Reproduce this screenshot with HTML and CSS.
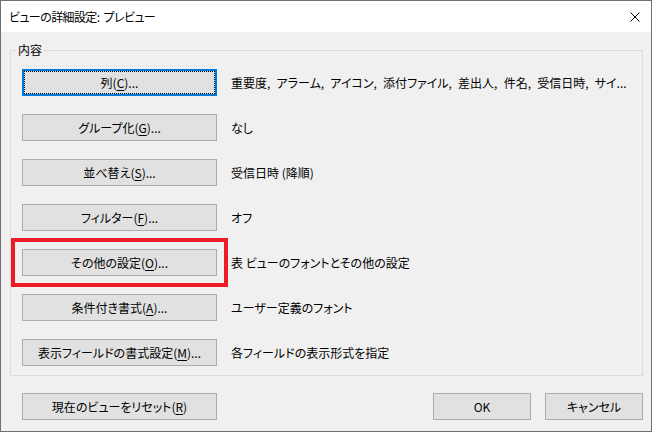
FILE: index.html
```html
<!DOCTYPE html>
<html lang="ja">
<head>
<meta charset="utf-8">
<title>ビューの詳細設定</title>
<link rel="stylesheet" href="styles.css">
</head>
<body>
<div class="window">
  <div class="titlebar">
    <span class="title">ビューの詳細設定: プレビュー</span>
    <span class="close">
      <svg width="10" height="10" viewBox="0 0 10 10"><path d="M0.5 0.5 L9.5 9.5 M9.5 0.5 L0.5 9.5" stroke="#000" stroke-width="1" fill="none"/></svg>
    </span>
  </div>
  <div class="content">
    <fieldset class="group">
      <legend class="legend">内容</legend>
      <div class="rows">
        <div class="row">
          <button class="btn wide focused">列(<u>C</u>)...</button>
          <span class="desc list">重要度, アラーム, アイコン, 添付ファイル, 差出人, 件名, 受信日時, サイ...</span>
        </div>
        <div class="row">
          <button class="btn wide">グループ化(<u>G</u>)...</button>
          <span class="desc">なし</span>
        </div>
        <div class="row">
          <button class="btn wide">並べ替え(<u>S</u>)...</button>
          <span class="desc">受信日時 (降順)</span>
        </div>
        <div class="row">
          <button class="btn wide">フィルター(<u>F</u>)...</button>
          <span class="desc">オフ</span>
        </div>
        <div class="row">
          <button class="btn wide highlighted">その他の設定(<u>O</u>)...</button>
          <span class="desc">表 ビューのフォントとその他の設定</span>
        </div>
        <div class="row">
          <button class="btn wide">条件付き書式(<u>A</u>)...</button>
          <span class="desc">ユーザー定義のフォント</span>
        </div>
        <div class="row">
          <button class="btn wide">表示フィールドの書式設定(<u>M</u>)...</button>
          <span class="desc">各フィールドの表示形式を指定</span>
        </div>
      </div>
    </fieldset>
    <div class="footer">
      <button class="btn wide">現在のビューをリセット(<u>R</u>)</button>
      <div class="spacer"></div>
      <button class="btn small">OK</button>
      <button class="btn small">キャンセル</button>
    </div>
  </div>
</div>
</body>
</html>
```

FILE: styles.css
```css
* { box-sizing: border-box; }
html, body {
  margin: 0;
  padding: 0;
  background: #f0f0f0;
}
body {
  font-family: "Noto Sans CJK JP", "Noto Sans", sans-serif;
  font-size: 12px;
  line-height: 16px;
  color: #000;
  font-feature-settings: "palt" 1;
}
.window {
  width: 652px;
  height: 432px;
  border: 1px solid #707070;
  background: #f0f0f0;
  display: flex;
  flex-direction: column;
}
.titlebar {
  height: 31px;
  background: #fff;
  display: flex;
  align-items: center;
  padding: 0 11px 0 8px;
  flex: none;
}
.title {
  flex: 1;
  font-size: 12px;
  letter-spacing: -0.6px;
  word-spacing: 2px;
}
.close {
  width: 10px;
  height: 10px;
  display: flex;
}
.content {
  padding: 10px 8px 0 9px;
  display: flex;
  flex-direction: column;
}
.group {
  margin: 0;
  border: 1px solid #dcdcdc;
  padding: 0 8px 9px 11px;
  width: 633px;
}
.legend {
  padding: 0 2px;
  margin-left: -6px;
  line-height: 16px;
}
.rows {
  display: flex;
  flex-direction: column;
  gap: 18px;
  padding-top: 11px;
}
.row {
  display: flex;
  align-items: center;
  gap: 14px;
}
.btn {
  font-family: inherit;
  font-feature-settings: "palt" 1;
  font-size: 12px;
  line-height: 16px;
  color: #000;
  background: #e1e1e1;
  border: 1px solid #adadad;
  height: 27px;
  padding: 0;
  margin: 0;
  flex: none;
}
.btn u { text-underline-offset: 2px; }
.wide { width: 195px; }
.small { width: 98px; }
.focused {
  border: 2px solid #0078d7;
  outline: 1px dotted #000;
  outline-offset: -3px;
}
.highlighted {
  outline: 4px solid #ec1c24;
  outline-offset: 7px;
}
.desc {
  white-space: nowrap;
}
.list {
  word-spacing: 3.5px;
}
.footer {
  display: flex;
  align-items: center;
  gap: 14px;
  margin-top: 17px;
  padding: 0 0 0 12px;
}
.spacer { flex: 1; }
```
